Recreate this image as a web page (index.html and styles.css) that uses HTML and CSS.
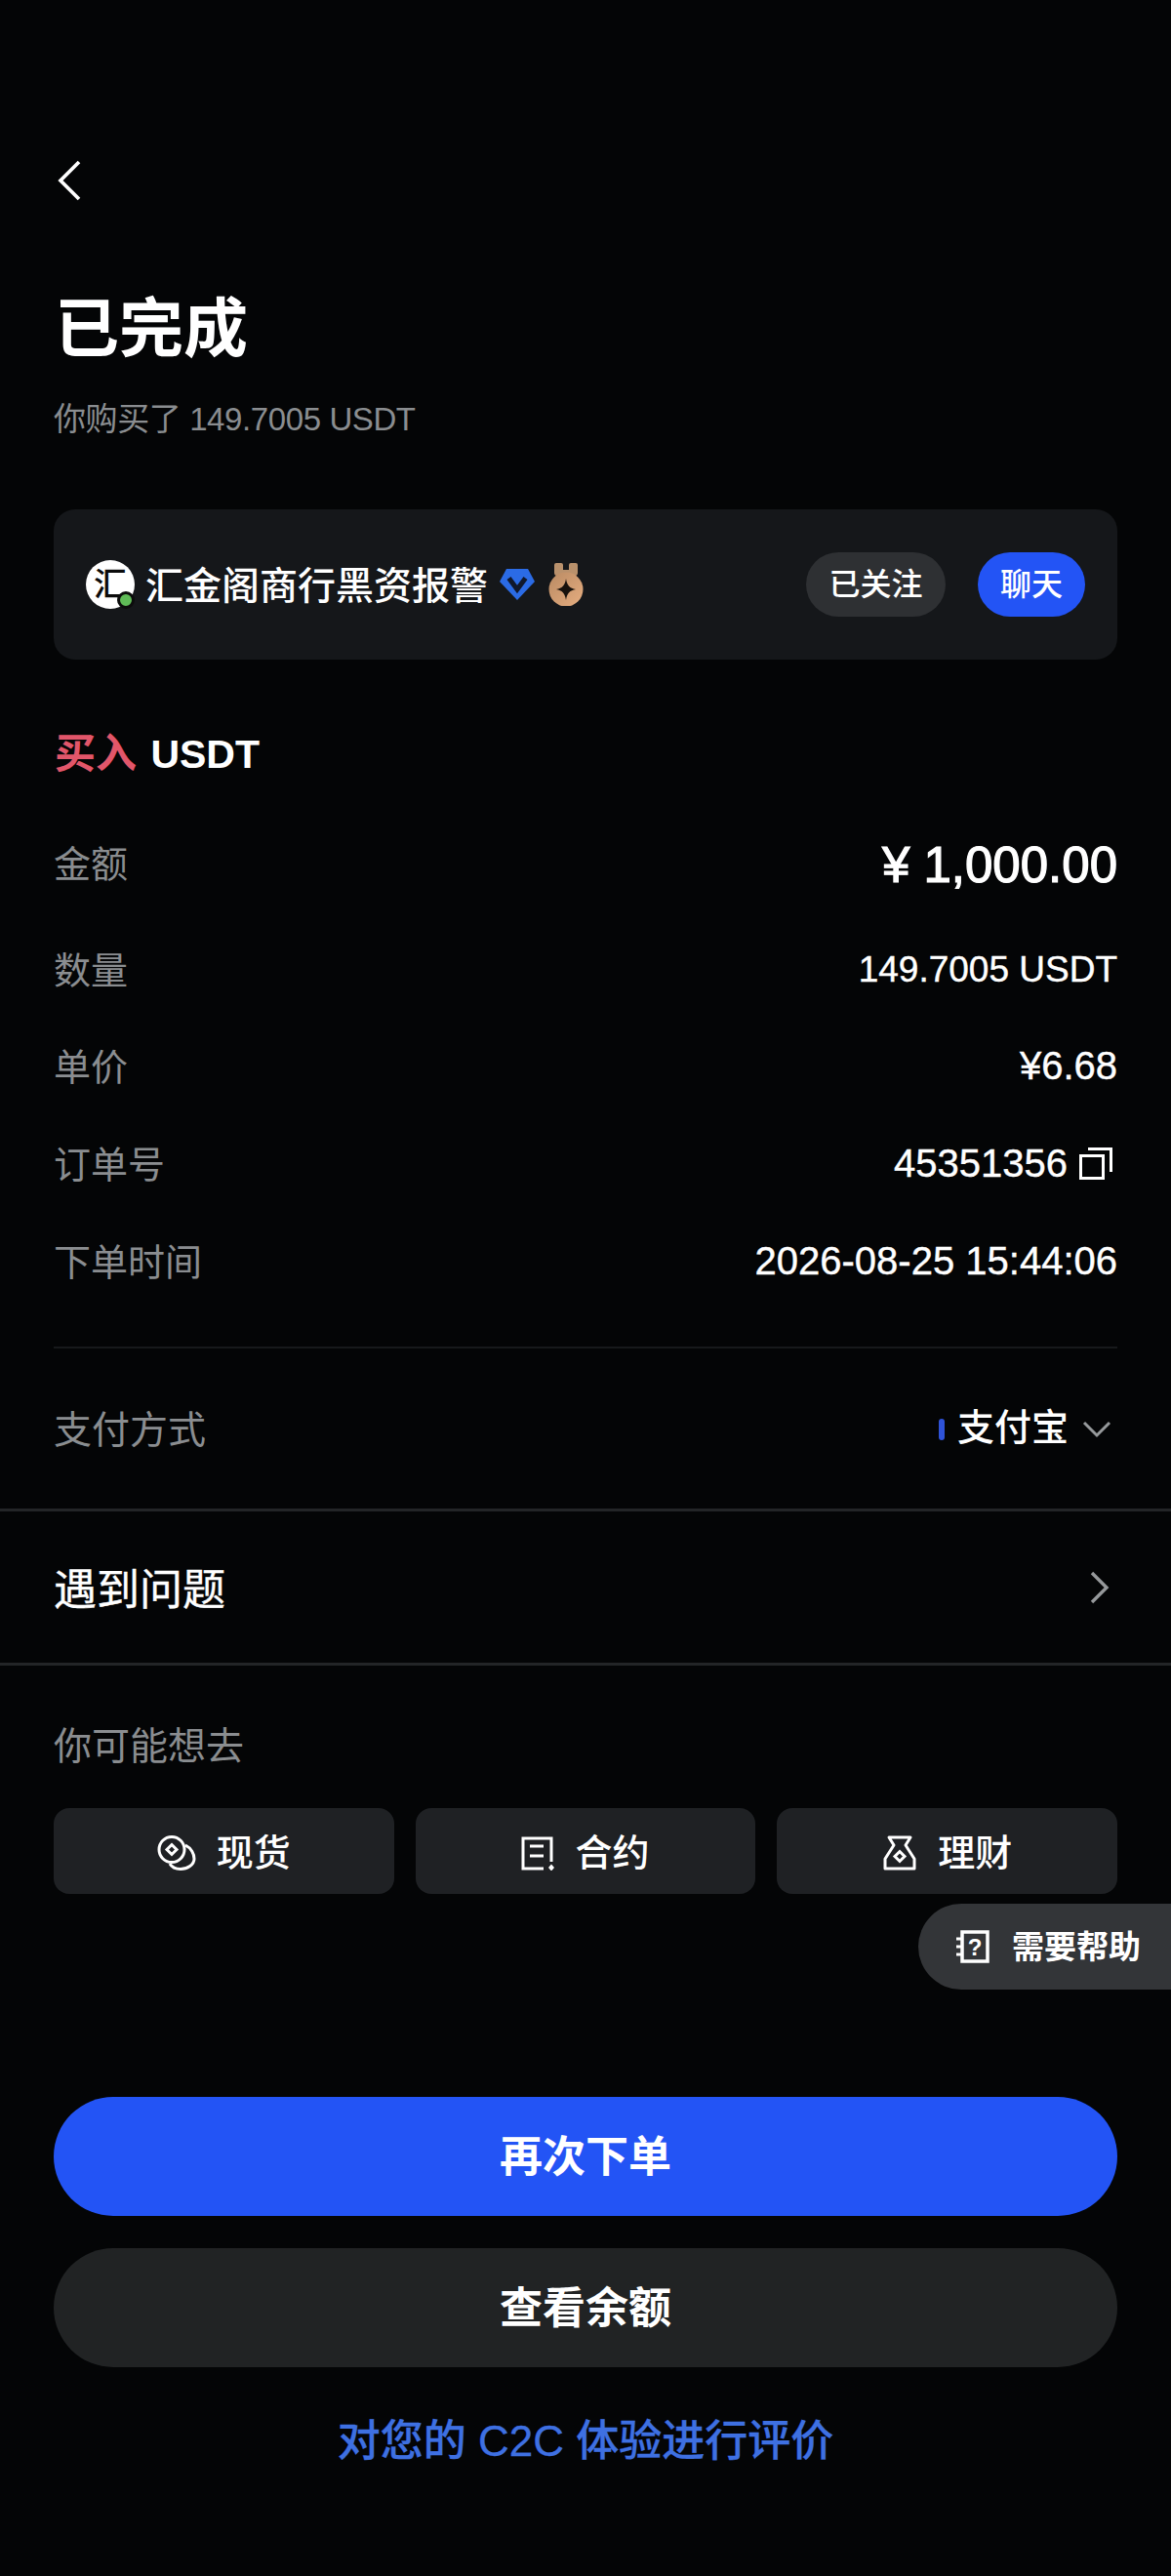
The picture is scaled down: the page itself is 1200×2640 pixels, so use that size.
FILE: index.html
```html
<!DOCTYPE html>
<html lang="zh-CN">
<head>
<meta charset="utf-8">
<title>已完成</title>
<link rel="stylesheet" href="styles.css">
</head>
<body>
<main class="page">
  <header class="head">
    <svg class="back" viewBox="0 0 24 42" width="24" height="42"><path d="M22 2 3 21l19 19" fill="none" stroke="#fff" stroke-width="3.7"/></svg>
    <h1 class="title">已完成</h1>
    <p class="sub">你购买了 149.7005 USDT</p>
  </header>

  <section class="card">
    <div class="avatar"><span class="avatar-char">汇</span><i class="dot"></i></div>
    <span class="name">汇金阁商行黑资报警</span>
    <svg class="badge" viewBox="0 0 36 32" width="36" height="32"><path d="M7 0h22l7 13-18 19L0 13z" fill="#2b6be5"/><path d="M9.5 9.5 18 21l8.500-11.500" fill="none" stroke="#10182c" stroke-width="5"/></svg>
    <svg class="medal" viewBox="0 0 36 44" width="36" height="44"><defs><linearGradient id="md" x1="0" y1="0" x2="1" y2="1"><stop offset="0" stop-color="#b98a63"/><stop offset="1" stop-color="#e6ad80"/></linearGradient></defs><path d="M6 2q0-2 2-2h5q2 0 2 2v5h6V2q0-2 2-2h5q2 0 2 2v8q0 3-3 3H9q-3 0-3-3z" fill="#b9916c"/><circle cx="18" cy="27" r="17.500" fill="url(#md)"/><path d="M18 16c1 7 4 10 10 11-6 1-9 4-10 11-1-7-4-10-10-11 6-1 9-4 10-11z" fill="#17110c"/></svg>
    <span class="pill pill-follow">已关注</span>
    <span class="pill pill-chat">聊天</span>
  </section>

  <section class="details">
    <h2 class="trade"><span class="buy">买入</span> USDT</h2>
    <div class="row row-amount"><span class="label">金额</span><span class="amount">¥ 1,000.00</span></div>
    <div class="row row-qty"><span class="label">数量</span><span class="value value-qty">149.7005 USDT</span></div>
    <div class="row row-std"><span class="label">单价</span><span class="value">¥6.68</span></div>
    <div class="row row-std"><span class="label">订单号</span><span class="value value-order">45351356
      <svg class="copy" viewBox="0 0 34 33" width="34" height="33"><path d="M9 1.500h23.500V25" fill="none" stroke="#fff" stroke-width="3"/><rect x="1.500" y="8.500" width="23" height="23" fill="none" stroke="#fff" stroke-width="3"/></svg></span></div>
    <div class="row row-std"><span class="label">下单时间</span><span class="value">2026-08-25 15:44:06</span></div>
  </section>

  <div class="pay">
    <span class="label-plain">支付方式</span>
    <span class="pay-value"><i class="pay-bar"></i><span class="pay-name">支付宝</span>
      <svg class="chev-down" viewBox="0 0 30 18" width="30" height="18"><path d="M2 2l13 13L28 2" fill="none" stroke="#96999b" stroke-width="3"/></svg></span>
  </div>

  <div class="issue">
    <span class="issue-text">遇到问题</span>
    <svg class="chev-right" viewBox="0 0 20 34" width="20" height="34"><path d="M2 2l15 15L2 32" fill="none" stroke="#96999b" stroke-width="3.4"/></svg>
  </div>

  <section class="goto">
    <p class="goto-title">你可能想去</p>
    <div class="goto-grid">
      <div class="goto-btn">
        <svg viewBox="0 0 40 36" width="40" height="36" class="goto-icon"><circle cx="15" cy="14.500" r="13" fill="none" stroke="#fff" stroke-width="3"/><path d="M29 10c6 3 9 9 9 14 0 6-7 10.500-14 10.500-5 0-9-2-11-5.500" fill="none" stroke="#fff" stroke-width="3"/><path d="M15 9.500l5 5-5 5-5-5z" fill="none" stroke="#fff" stroke-width="3"/></svg>
        <span class="goto-text">现货</span>
      </div>
      <div class="goto-btn">
        <svg viewBox="0 0 34 36" width="34" height="36" class="goto-icon"><path d="M31 27V3H2v31h21" fill="none" stroke="#fff" stroke-width="3"/><path d="M9 11h14M9 21h14" stroke="#fff" stroke-width="3"/><path d="M31 29.500l3 3.500-3 3.500-3-3.500z" fill="#fff"/></svg>
        <span class="goto-text">合约</span>
      </div>
      <div class="goto-btn">
        <svg viewBox="0 0 36 36" width="36" height="36" class="goto-icon"><path d="M7 2h22l-5 8 9 14v10H3V24l9-14z" fill="none" stroke="#fff" stroke-width="3" stroke-linejoin="round"/><path d="M18 16.500l5 5-5 5-5-5z" fill="none" stroke="#fff" stroke-width="3"/></svg>
        <span class="goto-text">理财</span>
      </div>
    </div>
  </section>

  <aside class="help">
    <svg viewBox="0 0 34 34" width="34" height="34" class="help-icon"><path d="M6 2h26v30H6z" fill="none" stroke="#fff" stroke-width="3.500"/><path d="M0 9h6M0 17h6M0 25h6" stroke="#fff" stroke-width="3"/><text x="19" y="25.500" text-anchor="middle" class="help-q">?</text></svg>
    <span class="help-text">需要帮助</span>
  </aside>

  <footer class="actions">
    <div class="cta cta-primary">再次下单</div>
    <div class="cta cta-secondary">查看余额</div>
    <div class="rate">对您的 C2C 体验进行评价</div>
  </footer>
</main>
</body>
</html>
```
FILE: styles.css
```css
* { box-sizing: border-box; }
html, body { margin: 0; padding: 0; background: #040506; }
body { font-family: "Liberation Sans", "Noto Sans CJK SC", sans-serif; color: #fff; }
.page { position: relative; width: 1200px; height: 2640px; overflow: hidden; background: #040506; }
h1, h2, p { margin: 0; font-weight: inherit; }

.head { padding: 164px 55px 0; }
.back { display: block; margin-left: 4px; }
.title { font-size: 66px; font-weight: 700; line-height: 88px; margin-top: 87px; margin-left: 1px; }
.sub { font-size: 33px; letter-spacing: -0.4px; line-height: 44px; margin-top: 27px; color: #8a8d90; }

.card { margin: 70px 55px 0; height: 154px; padding: 0 33px; border-radius: 22px; background: #15171a; display: flex; align-items: center; }
.avatar { position: relative; width: 50px; height: 50px; border-radius: 50%; background: #fff; color: #0b0b0b; display: flex; align-items: center; justify-content: center; flex: none; }
.avatar-char { font-size: 34px; line-height: 1; font-weight: 500; }
.dot { position: absolute; right: 0; bottom: 0; width: 18px; height: 18px; border-radius: 50%; background: #5fbb57; border: 3px solid #0c0c0c; }
.name { font-size: 39px; font-weight: 500; margin-left: 11px; padding-bottom: 4px; white-space: nowrap; }
.badge { margin-left: 12px; flex: none; }
.medal { margin-left: 14px; flex: none; }
.pill { height: 66px; border-radius: 33px; display: flex; align-items: center; justify-content: center; padding-bottom: 6px; font-size: 32px; font-weight: 500; flex: none; }
.pill-follow { width: 143px; background: #2e3033; margin-left: auto; }
.pill-chat { width: 110px; background: #2354f5; margin-left: 33px; }

.details { padding: 0 55px; }
.trade { font-size: 41px; line-height: 60px; font-weight: 700; margin-top: 67px; margin-left: 1px; }
.buy { font-size: 42px; color: #e2566a; margin-right: 3px; }
.row { display: flex; justify-content: space-between; align-items: center; }
.label { font-size: 38px; color: #8a8d90; padding-bottom: 4px; }
.row-amount { height: 60px; margin-top: 53px; }
.row-amount .label { padding-bottom: 8px; }
.amount { font-size: 51px; font-weight: 400; -webkit-text-stroke: 1.2px #fff; }
.row-qty { height: 60px; margin-top: 48px; }
.row-qty .label { padding-bottom: 6px; }
.row-std { height: 60px; margin-top: 40px; }
.row-qty + .row-std { margin-top: 38px; }
.value { font-size: 40px; -webkit-text-stroke: 0.4px #fff; white-space: nowrap; }
.value-qty { font-size: 37px; }
.value-order { display: flex; align-items: center; gap: 12px; margin-right: 5px; }
.copy { flex: none; }

.pay { margin: 58px 55px 0; border-top: 2px solid #17191b; padding-bottom: 10px; height: 166px; display: flex; justify-content: space-between; align-items: center; }
.label-plain { font-size: 39px; color: #8a8d90; margin-top: 6px; }
.pay-value { display: flex; align-items: center; margin-top: 1px; }
.pay-bar { width: 6px; height: 22px; border-radius: 3px; background: #2f53d8; margin: 10px 13px 0 0; }
.pay-name { font-size: 38px; font-weight: 500; }
.chev-down { margin: 10px 6px 0 14px; }

.issue { border-top: 3px solid #232527; border-bottom: 3px solid #232527; height: 161px; padding: 0 63px 0 55px; display: flex; justify-content: space-between; align-items: center; }
.issue-text { font-size: 44px; font-weight: 400; -webkit-text-stroke: 0.4px #fff; padding-bottom: 2px; }

.goto { padding: 0 55px; }
.goto-title { font-size: 39px; line-height: 56px; margin-top: 55px; color: #8a8d90; }
.goto-grid { display: grid; grid-template-columns: repeat(3, 1fr); gap: 22px; margin-top: 35px; }
.goto-btn { height: 88px; border-radius: 16px; background: #1f2124; display: flex; align-items: center; justify-content: center; gap: 21px; font-size: 38px; font-weight: 500; }
.goto-icon { flex: none; margin-top: 4px; }
.goto-text { padding-bottom: 3px; }

.help { position: absolute; left: 941px; top: 1951px; width: 259px; height: 88px; border-radius: 44px 0 0 44px; background: #333538; display: flex; align-items: center; padding-left: 39px; gap: 23px; font-size: 33px; font-weight: 700; }
.help-icon { flex: none; }
.help-text { padding-bottom: 5px; }
.help-q { font-size: 24px; font-weight: 700; fill: #fff; }

.actions { padding: 208px 55px 0; }
.cta { height: 122px; border-radius: 61px; display: flex; align-items: center; justify-content: center; padding-bottom: 6px; font-size: 44px; font-weight: 700; }
.cta-primary { background: #2354f5; }
.cta-secondary { background: #212324; margin-top: 33px; }
.rate { font-size: 44px; font-weight: 500; -webkit-text-stroke: 0.3px #3e70e2; color: #3e70e2; text-align: center; margin-top: 46px; line-height: 60px; }
```
